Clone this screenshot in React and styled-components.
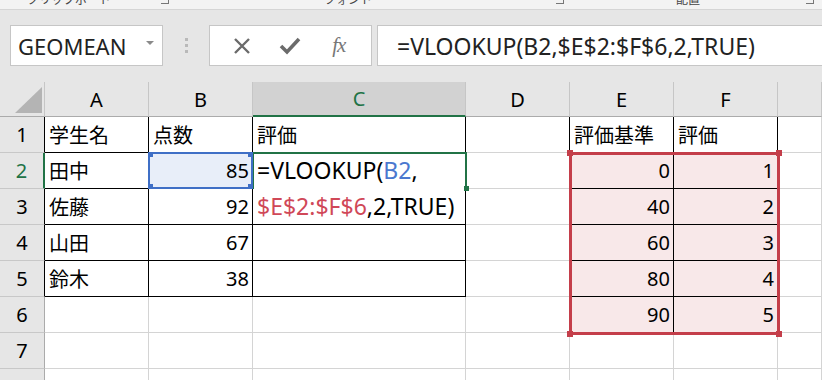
import React from "react";
import styled, { createGlobalStyle, css } from "styled-components";

const GlobalStyle = createGlobalStyle`
  html, body {
    margin: 0;
    padding: 0;
    background: #ffffff;
    overflow: hidden;
  }
  body {
    font-family: "Noto Sans", "Noto Sans CJK JP", sans-serif;
    color: #000;
  }
`;

const GRID = "#d4d4d4";
const BLACK = "#000";
const GREEN = "#217346";
const BLUE = "#3f6fc6";
const RED = "#c43e4a";
const PINK = "#f8e8e9";

const Page = styled.div`
  width: 822px;
  height: 380px;
  overflow: hidden;
  display: flex;
  flex-direction: column;
`;

const RibbonStrip = styled.div`
  height: 9px;
  flex: none;
  background: #f3f3f3;
  border-bottom: 1px solid #d5d5d5;
  display: flex;
  align-items: flex-start;
  overflow: hidden;
`;

const GroupLabel = styled.span`
  margin-left: ${(p) => p.$ml}px;
  margin-top: -7px;
  font-family: "Noto Sans CJK JP", sans-serif;
  font-size: 12px;
  line-height: 12px;
  color: #444;
  white-space: nowrap;
`;

const Launcher = styled.span`
  margin-left: ${(p) => p.$ml}px;
  margin-top: -4px;
  width: 8px;
  height: 8px;
  border-right: 1px solid #777;
  border-bottom: 1px solid #777;
  box-sizing: border-box;
`;

const FormulaBand = styled.div`
  height: 72px;
  flex: none;
  background: #e6e6e6;
  box-sizing: border-box;
  padding: 15px 0 0 10px;
  display: flex;
  align-items: flex-start;
`;

const Box = styled.div`
  height: 41px;
  box-sizing: border-box;
  background: #fff;
  border: 1px solid #c6c6c6;
  display: flex;
  align-items: center;
`;

const NameBox = styled(Box)`
  width: 153px;
  padding: 0 8px 0 7px;
  justify-content: space-between;
  font-size: 22px;
  color: #222;
`;

const DropArrow = styled.span`
  width: 0;
  height: 0;
  margin-top: -6px;
  border-left: 4px solid transparent;
  border-right: 4px solid transparent;
  border-top: 4px solid #8a8a8a;
`;

const Grip = styled.div`
  width: 46px;
  height: 41px;
  display: flex;
  flex-direction: column;
  align-items: center;
  justify-content: center;
  gap: 3px;
  span {
    width: 3px;
    height: 3px;
    background: #b9b9b9;
  }
`;

const ButtonBox = styled(Box)`
  width: 163px;
  justify-content: space-around;
  padding: 0 8px;
`;

const IconSlot = styled.span`
  width: 26px;
  display: flex;
  justify-content: center;
  align-items: center;
`;

const Fx = styled.span`
  font-family: "Liberation Serif", serif;
  font-style: italic;
  font-size: 21px;
  color: #777;
  letter-spacing: -1px;
`;

const FormulaInput = styled(Box)`
  flex: 1;
  margin-left: 5px;
  margin-right: -4px;
  padding-left: 19px;
  font-size: 23px;
  color: #222;
  white-space: nowrap;
`;

const Sheet = styled.div`
  display: grid;
  grid-template-columns: 45px 104px 104px 213px 104px 104px 104px 1fr;
  grid-template-rows: 35px;
  grid-auto-rows: 36px;
  position: relative;
`;

// explicit grid placement so the range frame can overlap cells
const place = css`
  grid-row: ${(p) => p.$row};
  grid-column: ${(p) => p.$col};
`;

const Corner = styled.div`
  ${place}
  background: #e6e6e6;
  border-right: 1px solid #c6c6c6;
  border-bottom: 1px solid #ababab;
  box-sizing: border-box;
`;

const ColHead = styled.div`
  ${place}
  box-sizing: border-box;
  background: ${(p) => (p.$active ? "#d2d2d2" : "#e6e6e6")};
  border-right: 1px solid #c6c6c6;
  border-bottom: ${(p) => (p.$active ? `2px solid ${GREEN}` : "1px solid #ababab")};
  color: ${(p) => (p.$active ? GREEN : "#000")};
  font-size: 20px;
  display: flex;
  align-items: center;
  justify-content: center;
`;

const RowHead = styled.div`
  ${place}
  box-sizing: border-box;
  background: #e6e6e6;
  border-bottom: 1px solid #c8c8c8;
  border-right: ${(p) => (p.$active ? `2px solid ${GREEN}` : `1px solid ${p.$edge || "#ababab"}`)};
  color: ${(p) => (p.$active ? GREEN : "#000")};
  font-size: 20px;
  display: flex;
  align-items: center;
  justify-content: center;
`;

const Cell = styled.div`
  ${place}
  box-sizing: border-box;
  position: relative;
  background: ${(p) => p.$bg || "#fff"};
  border-right: 1px solid ${(p) => p.$r || GRID};
  border-bottom: 1px solid ${(p) => p.$b || GRID};
  display: flex;
  align-items: center;
  justify-content: ${(p) => (p.$num ? "flex-end" : "flex-start")};
  padding: ${(p) => (p.$num ? "0 3px 0 0" : "0 0 0 4px")};
  font-size: 20px;
  white-space: nowrap;
  z-index: ${(p) => p.$z || "auto"};
`;

const Selected = styled.div`
  position: absolute;
  inset: -1px -1px -1px -1px;
  border: 2px solid ${BLUE};
  pointer-events: none;
`;

const Handle = styled.span`
  position: absolute;
  width: ${(p) => p.$size}px;
  height: ${(p) => p.$size}px;
  background: ${(p) => p.$color};
  ${(p) => (p.$top ? `top: -${p.$off}px;` : `bottom: -${p.$off}px;`)}
  ${(p) => (p.$left ? `left: -${p.$off}px;` : `right: -${p.$off}px;`)}
`;

const EditCell = styled.div`
  ${place}
  box-sizing: border-box;
  position: relative;
  z-index: 1;
  background: #fff;
  border-right: 2px solid ${GREEN};
  margin-right: -1px;
  box-shadow: inset 1px 0 0 ${GREEN}, inset 0 2px 0 ${GREEN};
  margin-top: -1px;
  padding: 1px 0 0 4px;
  font-size: 23px;
  line-height: 36px;
  white-space: pre;
  overflow: visible;
`;

const EditLines = styled.div`
  margin-top: -1px;
`;

const EditBottom = styled.span`
  position: absolute;
  right: -4px;
  bottom: -2px;
  width: 5px;
  height: 5px;
  background: ${GREEN};
`;

const Ref = styled.span`
  color: ${(p) => p.$color};
`;

const RangeFrame = styled.div`
  grid-column: 6 / 8;
  grid-row: 3 / 8;
  margin: -1px -2px -2px -1px;
  border: 3px solid ${RED};
  position: relative;
  pointer-events: none;
  z-index: 2;
`;

const Triangle = () => (
  <svg width="45" height="35" viewBox="0 0 45 35">
    <polygon points="15,31 42,31 42,5" fill="#b4b4b4" />
  </svg>
);

const CrossIcon = () => (
  <svg width="18" height="18" viewBox="0 0 18 18">
    <path d="M2 2 L16 16 M16 2 L2 16" stroke="#6b6b6b" strokeWidth="2.4" />
  </svg>
);

const CheckIcon = () => (
  <svg width="22" height="18" viewBox="0 0 22 18">
    <path d="M2 9 L8 15 L20 2" stroke="#6b6b6b" strokeWidth="3.6" fill="none" />
  </svg>
);

const cols = ["A", "B", "C", "D", "E", "F", ""];

const rows = [
  ["学生名", "点数", "評価", "", "評価基準", "評価"],
  ["田中", "85", "", "", "0", "1"],
  ["佐藤", "92", "", "", "40", "2"],
  ["山田", "67", "", "", "60", "3"],
  ["鈴木", "38", "", "", "80", "4"],
  ["", "", "", "", "90", "5"],
  ["", "", "", "", "", ""],
  ["", "", "", "", "", ""],
];

function cellProps(r, c) {
  // r: 1-based row, c: 0-based column index in A..G
  const p = {};
  const inTable = r >= 1 && r <= 5 && c <= 2;
  const inRef = r >= 1 && r <= 6 && (c === 4 || c === 5);
  if (inTable || inRef) {
    p.$r = BLACK;
    p.$b = BLACK;
  }
  if (c === 3 && r >= 1 && r <= 6) p.$r = BLACK;
  if (inRef && r >= 2) p.$bg = PINK;
  return p;
}

const Corners = ({ color, size, off }) => (
  <>
    <Handle $color={color} $size={size} $off={off} $top $left />
    <Handle $color={color} $size={size} $off={off} $top />
    <Handle $color={color} $size={size} $off={off} $left />
    <Handle $color={color} $size={size} $off={off} />
  </>
);

export default function App() {
  return (
    <Page>
      <GlobalStyle />
      <RibbonStrip>
        <GroupLabel $ml={27}>クリップボード</GroupLabel>
        <Launcher $ml={50} />
        <GroupLabel $ml={155}>フォント</GroupLabel>
        <Launcher $ml={184} />
        <GroupLabel $ml={112}>配置</GroupLabel>
        <Launcher $ml={106} />
      </RibbonStrip>

      <FormulaBand>
        <NameBox>
          <span>GEOMEAN</span>
          <DropArrow />
        </NameBox>
        <Grip>
          <span />
          <span />
          <span />
        </Grip>
        <ButtonBox>
          <IconSlot>
            <CrossIcon />
          </IconSlot>
          <IconSlot>
            <CheckIcon />
          </IconSlot>
          <IconSlot>
            <Fx>fx</Fx>
          </IconSlot>
        </ButtonBox>
        <FormulaInput>=VLOOKUP(B2,$E$2:$F$6,2,TRUE)</FormulaInput>
      </FormulaBand>

      <Sheet>
        <Corner $row={1} $col={1}>
          <Triangle />
        </Corner>
        {cols.map((c, i) => (
          <ColHead key={i} $row={1} $col={i + 2} $active={c === "C"}>
            {c}
          </ColHead>
        ))}

        {rows.map((row, ri) => {
          const r = ri + 1;
          const gr = r + 1;
          return (
            <React.Fragment key={r}>
              <RowHead
                $row={gr}
                $col={1}
                $active={r === 2}
                $edge={r <= 5 ? BLACK : undefined}
              >
                {r}
              </RowHead>
              {[0, 1, 2, 3, 4, 5, 6].map((c) => {
                const v = row[c] || "";
                const num = v !== "" && !isNaN(Number(v));
                const gc = c + 2;
                if (r === 2 && c === 2) {
                  return (
                    <EditCell key={c} $row={gr} $col={gc}>
                      <EditLines>
                        {"=VLOOKUP("}
                        <Ref $color="#4a78cf">B2</Ref>
                        {",\n"}
                        <Ref $color="#d04858">$E$2:$F$6</Ref>
                        {",2,TRUE)"}
                      </EditLines>
                      <EditBottom />
                    </EditCell>
                  );
                }
                if (r === 2 && c === 1) {
                  return (
                    <Cell
                      key={c}
                      $row={gr}
                      $col={gc}
                      $num
                      $r={BLACK}
                      $b={BLACK}
                      $bg="#e8eef9"
                      $z={3}
                    >
                      {v}
                      <Selected>
                        <Corners color={BLUE} size={5} off={2} />
                      </Selected>
                    </Cell>
                  );
                }
                return (
                  <Cell key={c} $row={gr} $col={gc} $num={num} {...cellProps(r, c)}>
                    {v}
                  </Cell>
                );
              })}
            </React.Fragment>
          );
        })}

        <RangeFrame>
          <Corners color={RED} size={6} off={5} />
        </RangeFrame>
      </Sheet>
    </Page>
  );
}
